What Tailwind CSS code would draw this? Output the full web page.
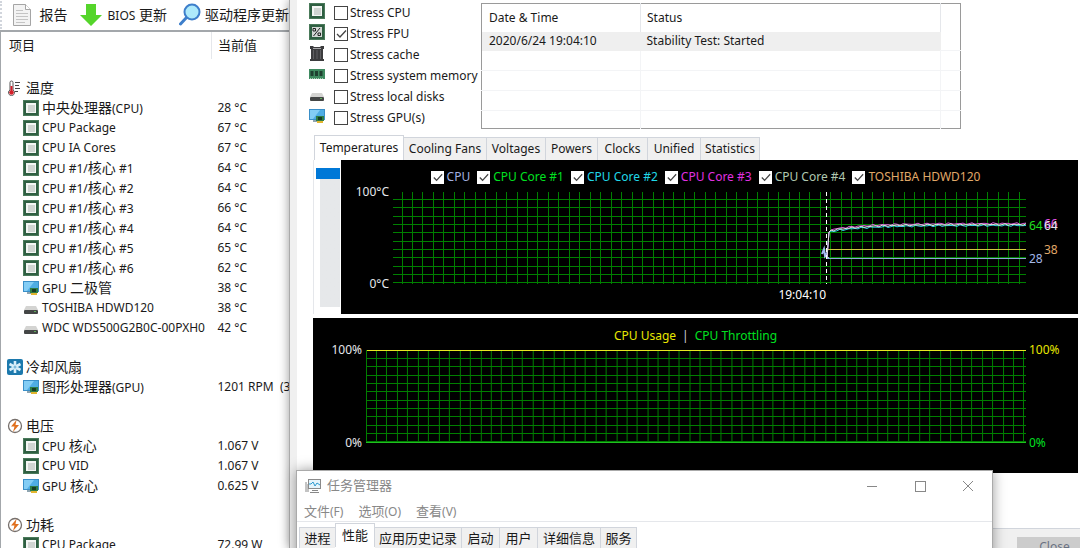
<!DOCTYPE html>
<html lang="zh-CN">
<head>
    <meta charset="UTF-8">
    <meta name="viewport" content="width=device-width, initial-scale=1.0">
    <title>System Stability Test</title>
    <script src="https://cdn.jsdelivr.net/npm/@tailwindcss/browser@4"></script>
</head>
<body class="h-screen overflow-hidden bg-[#f0f0f0] font-['Noto_Sans','Noto_Sans_CJK_SC',sans-serif] text-xs text-[#1a1a1a]">

    <!-- Icon set -->
    <svg class="hidden">
        <symbol id="chip" viewBox="0 0 16 16">
            <rect x="0.5" y="0.5" width="15" height="15" fill="#2f5f42" stroke="#4a7a5a"/>
            <rect x="3" y="3" width="10" height="10" fill="#f4f6f4"/>
            <rect x="5" y="5" width="7" height="7" fill="#d0d5d2"/>
        </symbol>
        <symbol id="fpu" viewBox="0 0 16 16">
            <rect x="0.5" y="0.5" width="15" height="15" fill="#2f5f42" stroke="#4a7a5a"/>
            <rect x="3" y="3" width="10" height="10" fill="#d3d8d5"/>
            <path d="M4.500 12L11 4M4 4.500h2.500V7H4zM9 9h2.500v2.500H9z" fill="none" stroke="#222"/>
        </symbol>
        <symbol id="cache" viewBox="0 0 16 16">
            <path d="M1 1h3l1 1h6l1-1h3v3h-1v10h1v2H1v-2h1V4H1z" fill="#3c3c3e"/>
            <path d="M4.500 5v9M8 5v9M11.500 5v9" stroke="#5f5f62"/>
            <path d="M4 3.500h8" stroke="#a8a8aa"/>
        </symbol>
        <symbol id="memory" viewBox="0 0 16 16">
            <rect y="3" width="16" height="10" fill="#3f8a60"/>
            <path d="M1.500 5h3v5h-3zM6 5h3v5H6zM10.500 5h3v5h-3z" fill="#1f4030"/>
            <path d="M1 12.500h14" stroke="#a9cdb5" stroke-dasharray="1 1"/>
        </symbol>
        <symbol id="disk" viewBox="0 0 16 16">
            <path d="M3 6h10l2 4H1z" fill="#d4d4d2"/>
            <rect x="1" y="10" width="14" height="4" rx="1" fill="#444646"/>
            <rect x="11" y="11" width="2" height="1" fill="#5fae5a"/>
        </symbol>
        <symbol id="gpu" viewBox="0 0 16 16">
            <rect x="0.500" y="1.500" width="15" height="10" fill="#4fadE4" stroke="#3a8fc8"/>
            <path d="M1 2h10L4 11H1z" fill="#83cdf5"/>
            <path d="M4 12h4v2H4z" fill="#8fa5b0"/>
            <rect x="7" y="8" width="8" height="5" fill="#2f7d46"/>
            <rect x="9" y="9" width="4" height="3" fill="#183d25"/>
            <path d="M8 14h6" stroke="#e3b62f" stroke-width="2"/>
        </symbol>
        <symbol id="thermo" viewBox="0 0 16 16">
            <path d="M3 2.500a1.500 1.500 0 0 1 3 0V10a3 3 0 1 1-3 0z" fill="#fff" stroke="#555"/>
            <path d="M4.500 6v5" stroke="#d3202a" stroke-width="2"/>
            <circle cx="4.500" cy="12.500" r="2.300" fill="#d3202a"/>
            <path d="M8 2.500h5M8 5.500h4M8 8.500h5M8 11.500h3" stroke="#444"/>
        </symbol>
        <symbol id="fan" viewBox="0 0 16 16">
            <rect width="16" height="16" rx="2" fill="#1c79ad"/>
            <path d="M8 2v12M2.500 5l11 6M13.500 5l-11 6" stroke="#d9effa" stroke-width="2.600"/>
            <circle cx="8" cy="8" r="1.500" fill="#7fbcdc"/>
        </symbol>
        <symbol id="bolt" viewBox="0 0 16 16">
            <circle cx="8" cy="8" r="6.500" fill="#fff" stroke="#77706c" stroke-width="1.300"/>
            <path d="M9.500 2L4 8.500h3.500L6 14l6-7H8.500z" fill="#e0701f"/>
        </symbol>
        <symbol id="check" viewBox="0 0 14 14">
            <path d="M3 7l3 3 6-6.500" fill="none" stroke="#444" stroke-width="1.300"/>
        </symbol>
    </svg>

    <div class="flex h-full">
        <!-- Sensor list -->
        <section class="w-[289px] shrink-0 overflow-hidden bg-white whitespace-nowrap">
            <div class="flex h-8 items-center border-b-2 border-[#a3a7ab] text-sm">
                <div class="h-7 w-3 border-l-2 border-dotted border-gray-300"></div>
                <button class="mr-3 flex items-center gap-2">
                    <svg class="h-6 w-5" viewBox="0 0 20 24">
                        <path d="M1.500 1.500h12l5 5v16h-17z" fill="#f3f3f3" stroke="#a5a5a5"/>
                        <path d="M13.500 1.500v5h5" fill="#fff" stroke="#a5a5a5"/>
                        <path d="M4 7.500h7M4 10.500h12M4 13.500h12M4 16.500h12M4 19.500h9" stroke="#c4c4c4"/>
                    </svg>
                    报告
                </button>
                <button class="mr-3 flex items-center gap-1.5">
                    <svg class="h-6 w-[22px]" viewBox="0 0 22 24"><path d="M6 1h10v11h6L11 23 0 12h6z" fill="#55d52b"/></svg>
                    <span><span class="text-xs">BIOS</span> 更新</span>
                </button>
                <button class="flex items-center gap-1">
                    <svg class="h-6 w-[22px]" viewBox="0 0 22 24">
                        <path d="M8 14l-6.500 7" stroke="#3e7fcb" stroke-width="3" stroke-linecap="round"/>
                        <circle cx="13" cy="9" r="7.500" fill="#aeeafb" stroke="#3e7fcb" stroke-width="2"/>
                    </svg>
                    驱动程序更新
                </button>
            </div>
            <table class="w-full table-fixed border-l border-[#a3a7ab] text-left">
                <thead>
                    <tr class="h-[27px] text-[13px]">
                        <th class="w-[211px] border-r border-gray-200 p-0 pl-2 font-normal">项目</th>
                        <th class="p-0 pl-1.5 font-normal">当前值</th>
                    </tr>
                </thead>
                <tbody id="sensors"></tbody>
            </table>
        </section>

        <!-- Stability test window -->
        <main class="relative flex min-w-0 flex-1 flex-col border-l border-[#aaa] pl-[7px] shadow-[0_0_10px_rgba(0,0,0,0.4)] bg-[#f0f0f0]">
            <div class="flex flex-1 flex-col bg-white">
                <div class="flex h-[135px] items-start pl-3">
                    <div id="stress" class="w-[172px] shrink-0 pt-0.5"></div>
                    <table class="mt-[3px] w-[480px] table-fixed border border-[#9a9a9a] text-left">
                        <thead>
                            <tr class="h-7">
                                <th class="w-[159px] border-r border-gray-200 p-0 pl-[7px] font-normal">Date &amp; Time</th>
                                <th class="border-r border-gray-200 p-0 pl-1.5 font-normal">Status</th>
                                <th class="w-5 p-0"></th>
                            </tr>
                        </thead>
                        <tbody>
                            <tr class="h-[19px]">
                                <td class="bg-[#efefef] p-0 pl-[7px]">2020/6/24 19:04:10</td>
                                <td class="bg-[#efefef] p-0 pl-1.5">Stability Test: Started</td>
                                <td class="border-b border-gray-100 p-0"></td>
                            </tr>
                            <tr class="h-5 border-b border-gray-100"><td class="border-r border-gray-100"></td><td class="border-r border-gray-100"></td><td></td></tr>
                            <tr class="h-5 border-b border-gray-100"><td class="border-r border-gray-100"></td><td class="border-r border-gray-100"></td><td></td></tr>
                            <tr class="h-5 border-b border-gray-100"><td class="border-r border-gray-100"></td><td class="border-r border-gray-100"></td><td></td></tr>
                            <tr class="h-[18px]"><td class="border-r border-gray-100"></td><td class="border-r border-gray-100"></td><td></td></tr>
                        </tbody>
                    </table>
                </div>

                <div class="flex h-[25px] items-end pl-[17px] whitespace-nowrap">
                    <button class="h-[25px] w-[90px] border border-b-0 border-gray-300 bg-white">Temperatures</button>
                    <button class="h-[23px] w-[83px] border-t border-r border-gray-300 bg-[#f0f0f0]">Cooling Fans</button>
                    <button class="h-[23px] w-[59px] border-t border-r border-gray-300 bg-[#f0f0f0]">Voltages</button>
                    <button class="h-[23px] w-[52px] border-t border-r border-gray-300 bg-[#f0f0f0]">Powers</button>
                    <button class="h-[23px] w-[50px] border-t border-r border-gray-300 bg-[#f0f0f0]">Clocks</button>
                    <button class="h-[23px] w-[53px] border-t border-r border-gray-300 bg-[#f0f0f0]">Unified</button>
                    <button class="h-[23px] w-[59px] border-t border-r border-gray-300 bg-[#f0f0f0]">Statistics</button>
                </div>

                <!-- Temperature graph -->
                <div class="flex pr-0.5 pl-4">
                    <div class="flex w-7 shrink-0 justify-center border-l border-gray-200 pt-2">
                        <input type="range" min="0" max="100" value="0" aria-label="Scale" class="h-[139px] w-6 appearance-none bg-linear-to-r from-white from-[4px] via-[#e6e8ea] via-[4px] to-[#e6e8ea] [writing-mode:vertical-lr] [&::-webkit-slider-thumb]:h-[11px] [&::-webkit-slider-thumb]:w-6 [&::-webkit-slider-thumb]:appearance-none [&::-webkit-slider-thumb]:bg-[#0078d7]">
                    </div>
                    <div class="h-[154px] min-w-0 flex-1 bg-black">
                        <div id="legend" class="flex h-8 items-center justify-center gap-[7px] pt-0.5 pr-2 whitespace-nowrap"></div>
                        <div class="flex">
                            <div class="flex h-[92px] w-[52px] shrink-0 flex-col justify-between pr-1 text-right leading-4 text-gray-200">
                                <span class="-mt-2">100°C</span>
                                <span class="-mb-2">0°C</span>
                            </div>
                            <div class="relative min-w-0 flex-1">
                                <svg id="temp-graph" class="h-[92px] w-full" viewBox="0 0 633 92" preserveAspectRatio="none" fill="none">
                                    <g id="temp-grid" stroke="#008000" shape-rendering="crispEdges"></g>
                                    <path d="M434 57.500H633" stroke="#d0c840"/>
                                    <path d="M434 66.500H633" stroke="#8fa5d8"/>
                                    <path d="M429 62l2-5 1 7 2-3v5h2" stroke="#a3b8f0" stroke-width="2"/>
                                    <path id="core2" stroke="#30d8e8"/>
                                    <path id="core3" stroke="#d858d8"/>
                                    <path id="core4" stroke="#e0e0e0"/>
                                    <path d="M433.500 0V92" stroke="#fff" stroke-dasharray="4 3"/>
                                </svg>
                                <span class="absolute top-[95px] right-[200px] leading-4 text-white">19:04:10</span>
                            </div>
                            <div class="relative w-[52px] shrink-0 leading-4">
                                <span class="absolute top-[26px] left-[3px] text-[#20e020]">64</span>
                                <span class="absolute top-6 left-[18px] text-[#e050e0]">66</span>
                                <span class="absolute top-[26px] left-[18px] text-gray-200">64</span>
                                <span class="absolute top-[50px] left-[18px] text-[#e0a868]">38</span>
                                <span class="absolute top-[59px] left-[3px] text-[#a3b8e8]">28</span>
                            </div>
                        </div>
                    </div>
                </div>

                <!-- Usage graph -->
                <div class="mt-1 mr-0.5 ml-4 h-[155px] bg-black">
                    <div class="flex h-8 items-center justify-center gap-1.5 pt-1">
                        <span class="text-[#e8e800]">CPU Usage</span>
                        <span class="text-gray-300">|</span>
                        <span class="text-[#00e020]">CPU Throttling</span>
                    </div>
                    <div class="flex">
                        <div class="flex h-[93px] w-[53px] shrink-0 flex-col justify-between pr-1 text-right leading-4 text-gray-200">
                            <span class="-mt-2">100%</span>
                            <span class="-mb-2">0%</span>
                        </div>
                        <svg class="h-[93px] min-w-0 flex-1" viewBox="0 0 661 93" preserveAspectRatio="none" fill="none" shape-rendering="crispEdges">
                            <g id="usage-grid" stroke="#008000"></g>
                            <path d="M0 92.500H661" stroke="#20c020"/>
                            <path d="M1 0.500H661" stroke="#e8e820"/>
                        </svg>
                        <div class="flex h-[93px] w-[52px] shrink-0 flex-col justify-between pl-[3px] leading-4">
                            <span class="-mt-2 text-[#e8e800]">100%</span>
                            <span class="-mb-2 text-[#00e020]">0%</span>
                        </div>
                    </div>
                </div>
            </div>
            <div class="flex h-5 shrink-0 items-start justify-end border-t border-gray-300 bg-[#f0f0f0] pt-2">
                <button class="h-5 w-[63px] shrink-0 bg-[#ccc] pl-3 text-gray-500">Close</button>
            </div>
        </main>
    </div>

    <!-- Task manager, in front of the other windows -->
    <section class="absolute top-[470px] left-[296px] h-24 w-[697px] border border-[#aaa] bg-white text-[13px] text-[#888] shadow-[0_0_12px_rgba(0,0,0,0.4)]">
        <header class="flex h-[30px] items-center pl-2">
            <svg class="mr-1.5 h-4 w-4" viewBox="0 0 16 16" fill="none">
                <path d="M1 4v10M3 6v8" stroke="#888"/>
                <rect x="3.500" y="1.500" width="12" height="9" fill="#e6f4fb" stroke="#8a8a8a"/>
                <path d="M4 6h2l2-2 2 4 2-3 3 2" stroke="#2d9bd0"/>
                <path d="M7 12.500h6M5 14.500h9" stroke="#888"/>
            </svg>
            <h2 class="flex-1">任务管理器</h2>
            <button aria-label="Minimize" class="flex w-12 justify-center"><svg class="size-3" viewBox="0 0 12 12"><path d="M1 6.500h10" stroke="#888"/></svg></button>
            <button aria-label="Maximize" class="flex w-12 justify-center"><svg class="size-3" viewBox="0 0 12 12"><rect x="1.500" y="1.500" width="10" height="10" fill="none" stroke="#888"/></svg></button>
            <button aria-label="Close" class="flex w-12 justify-center"><svg class="size-3" viewBox="0 0 12 12"><path d="M1 1l10 10M11 1L1 11" stroke="#888"/></svg></button>
        </header>
        <nav class="flex h-[21px] items-center gap-[15px] border-b border-gray-200 pt-px pl-[7px] whitespace-nowrap">
            <button>文件<span class="text-xs">(F)</span></button>
            <button>选项<span class="text-xs">(O)</span></button>
            <button>查看<span class="text-xs">(V)</span></button>
        </nav>
        <div class="flex h-[27px] items-end pl-0.5 whitespace-nowrap text-[#1a1a1a]">
            <button class="h-[22px] w-9 border-t border-l border-gray-300 bg-[#f0f0f0]">进程</button>
            <button class="mb-0.5 h-6 w-10 border border-b-0 border-gray-300 bg-white">性能</button>
            <button class="h-[22px] w-[87px] border-t border-r border-gray-300 bg-[#f0f0f0]">应用历史记录</button>
            <button class="h-[22px] w-[38px] border-t border-r border-gray-300 bg-[#f0f0f0]">启动</button>
            <button class="h-[22px] w-[38px] border-t border-r border-gray-300 bg-[#f0f0f0]">用户</button>
            <button class="h-[22px] w-[63px] border-t border-r border-gray-300 bg-[#f0f0f0]">详细信息</button>
            <button class="h-[22px] w-9 border-t border-r border-gray-300 bg-[#f0f0f0]">服务</button>
        </div>
    </section>

    <script>
        // [icon, name, value]; no value = group title, null = empty row
        const sensors = [
            null,
            ["thermo", "温度"],
            ["chip", "中央处理器(CPU)", "28 °C"],
            ["chip", "CPU Package", "67 °C"],
            ["chip", "CPU IA Cores", "67 °C"],
            ["chip", "CPU #1/核心 #1", "64 °C"],
            ["chip", "CPU #1/核心 #2", "64 °C"],
            ["chip", "CPU #1/核心 #3", "66 °C"],
            ["chip", "CPU #1/核心 #4", "64 °C"],
            ["chip", "CPU #1/核心 #5", "65 °C"],
            ["chip", "CPU #1/核心 #6", "62 °C"],
            ["gpu", "GPU 二极管", "38 °C"],
            ["disk", "TOSHIBA HDWD120", "38 °C"],
            ["disk", "WDC WDS500G2B0C-00PXH0", "42 °C"],
            null,
            ["fan", "冷却风扇"],
            ["gpu", "图形处理器(GPU)", "1201 RPM&nbsp; (3"],
            null,
            ["bolt", "电压"],
            ["chip", "CPU 核心", "1.067 V"],
            ["chip", "CPU VID", "1.067 V"],
            ["gpu", "GPU 核心", "0.625 V"],
            null,
            ["bolt", "功耗"],
            ["chip", "CPU Package", "72.99 W"],
        ];

        // Chinese glyphs are set larger than the latin text
        const mixed = (text) => text.replace(/[\u4e00-\u9fff]+/g, '<span class="text-sm leading-5">$&</span>');

        document.getElementById("sensors").innerHTML = sensors.map((s) => {
            if (!s) return '<tr class="h-[19px]"><td class="p-0" colspan="2"></td></tr>';
            const [icon, name, value] = s;
            return `
                <tr class="h-5">
                    <td class="p-0 ${value ? "pl-[22px]" : "pl-1.5"}">
                        <div class="flex h-5 items-center gap-[3px] leading-5"><svg class="size-4 shrink-0"><use href="#${icon}"/></svg><span>${mixed(name)}</span></div>
                    </td>
                    <td class="p-0 pl-1.5 leading-5">${value || ""}</td>
                </tr>`;
        }).join("");

        const stress = [
            ["chip", "Stress CPU"],
            ["fpu", "Stress FPU", true],
            ["cache", "Stress cache"],
            ["memory", "Stress system memory"],
            ["disk", "Stress local disks"],
            ["gpu", "Stress GPU(s)"],
        ];

        document.getElementById("stress").innerHTML = stress.map(([icon, name, on]) => `
            <div class="flex h-[21px] items-center whitespace-nowrap">
                <svg class="mr-[9px] mb-1 size-4 shrink-0"><use href="#${icon}"/></svg>
                <label class="flex items-center gap-0.5">
                    <span class="grid">
                        <input type="checkbox" ${on ? "checked" : ""} class="peer col-start-1 row-start-1 size-3.5 appearance-none border border-[#444] bg-white">
                        <svg class="invisible col-start-1 row-start-1 size-3.5 peer-checked:visible"><use href="#check"/></svg>
                    </span>
                    ${name}
                </label>
            </div>`).join("");

        const series = [
            ["CPU", "text-[#a3b0e0]"],
            ["CPU Core #1", "text-[#00e020]"],
            ["CPU Core #2", "text-[#20d8e8]"],
            ["CPU Core #3", "text-[#e030e0]"],
            ["CPU Core #4", "text-[#b0c8b0]"],
            ["TOSHIBA HDWD120", "text-[#e0a868]"],
        ];

        document.getElementById("legend").innerHTML = series.map(([name, color]) => `
            <label class="flex items-center gap-[3px] ${color}">
                <span class="grid">
                    <input type="checkbox" checked class="peer col-start-1 row-start-1 size-[13px] appearance-none bg-white">
                    <svg class="invisible col-start-1 row-start-1 size-[13px] peer-checked:visible"><use href="#check"/></svg>
                </span>
                ${name}
            </label>`).join("");

        function grid(id, x0, y0, width, height) {
            let d = "";
            for (let x = x0; x < width; x += 10.46) d += `M${Math.floor(x) + 0.5} 0V${height}`;
            for (let y = y0; y < height; y += 8.36) d += `M0 ${Math.floor(y) + 0.5}H${width}`;
            document.getElementById(id).innerHTML = `<path d="${d}"/>`;
        }
        grid("temp-grid", 9, 7.4, 633, 92);
        grid("usage-grid", 0, 0, 661, 93);

        // Core temperatures climb fast, then level out with a little noise
        function curve(id, offset, phase) {
            let d = "M434 66L436 40";
            for (let x = 438; x <= 633; x += 3) {
                const y = 32.5 + 6 * Math.exp((438 - x) / 35) + offset + Math.sin(x * 0.7 + phase) * Math.sin(x * 0.13 + phase);
                d += `L${x} ${y.toFixed(1)}`;
            }
            document.getElementById(id).setAttribute("d", d);
        }
        curve("core2", 1, 0);
        curve("core3", -1, 2);
        curve("core4", 0, 4);
    </script>

</body>
</html>
